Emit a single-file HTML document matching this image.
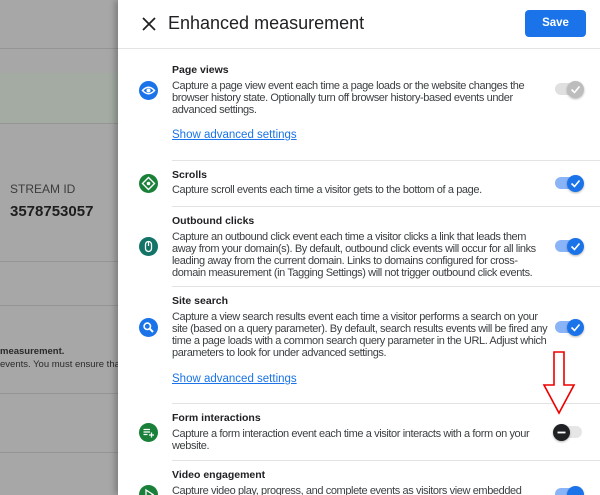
<!DOCTYPE html>
<html><head><meta charset="utf-8"><style>
*{margin:0;padding:0;box-sizing:border-box}
html,body{width:600px;height:495px;overflow:hidden}
body{position:relative;font-family:"Liberation Sans",Arial,sans-serif;background:#a7a7a7}
.a{position:absolute;white-space:nowrap}
.hl{position:absolute;left:0;width:118px;height:1px;background:#959595}
#panel{position:absolute;left:118px;top:0;width:482px;height:495px;background:#fff;box-shadow:-3px 0 6px rgba(0,0,0,.25);overflow:hidden}
.t{position:absolute;left:54px;font-size:10.5px;font-weight:bold;color:#202124}
.d{position:absolute;left:54px;font-size:11px;letter-spacing:-0.4px;line-height:12px;color:#3c4043;white-space:nowrap}
.lk{position:absolute;left:54px;font-size:11.5px;color:#1a73e8;text-decoration:underline}
.dv{position:absolute;left:54px;right:0;height:1px;background:#e3e3e3}
.ic{position:absolute;left:21px;width:19px;height:19px;border-radius:50%}
.tg{position:absolute;left:437px;width:27px;height:12px;border-radius:6px;background:#8ab4f8}
.kn{position:absolute;width:17px;height:17px;border-radius:50%;top:-2.5px;left:12px;background:#1a73e8;box-shadow:0 1px 2px rgba(0,0,0,.3)}
</style></head><body>
<div class="hl" style="top:48px"></div>
<div class="a" style="left:0;top:73px;width:118px;height:50px;background:#a3aba3"></div>
<div class="hl" style="top:123px"></div>
<div class="a" style="left:10px;top:182px;font-size:12px;color:#3c3c3c">STREAM ID</div>
<div class="a" style="left:10px;top:203px;font-size:15px;font-weight:bold;color:#1e1e1e">3578753057</div>
<div class="hl" style="top:261px"></div>
<div class="hl" style="top:305px"></div>
<div class="a" style="left:0;top:346px;font-size:9.5px;font-weight:bold;color:#2a2a2a">measurement.</div>
<div class="a" style="left:0;top:359px;font-size:9.5px;color:#2a2a2a">events. You must ensure tha</div>
<div class="hl" style="top:393px"></div>
<div class="hl" style="top:452px"></div>

<div id="panel">
<svg class="a" style="left:24px;top:17px" width="14" height="14" viewBox="0 0 14 14"><path d="M1 1L13 13M13 1L1 13" stroke="#202124" stroke-width="1.8"/></svg>
<div class="a" style="left:50px;top:13px;font-size:18px;color:#202124">Enhanced measurement</div>
<div class="a" style="left:407px;top:10px;width:61px;height:27px;background:#1a73e8;border-radius:4px;color:#fff;font-size:11.5px;font-weight:bold;text-align:center;line-height:27px">Save</div>
<div class="a" style="left:0;right:0;top:48px;height:1px;background:#e3e3e3"></div>

<div class="ic" style="top:81px;background:#1a73e8"><svg width="19" height="19" viewBox="0 0 19 19"><path d="M3.5 9.5Q9.5 3 15.5 9.5Q9.5 16 3.5 9.5Z" fill="none" stroke="#fff" stroke-width="1.5"/><circle cx="9.5" cy="9.5" r="2" fill="#fff"/></svg></div>
<div class="t" style="top:64px">Page views</div>
<div class="d" style="top:80px">Capture a page view event each time a page loads or the website changes the<br>browser history state. Optionally turn off browser history-based events under<br>advanced settings.</div>
<div class="lk" style="top:129px">Show advanced settings</div>
<div class="tg" style="top:83px;background:#e0e0e0"><div class="kn" style="background:#bdbdbd"><svg width="17" height="17" viewBox="0 0 17 17"><path d="M4.5 8.5L7.5 11.5L12.5 5.5" fill="none" stroke="#fff" stroke-width="1.6"/></svg></div></div>
<div class="dv" style="top:160px"></div>

<div class="ic" style="top:174px;background:#188038"><svg width="19" height="19" viewBox="0 0 19 19"><path d="M9.5 3.5L15.5 9.5L9.5 15.5L3.5 9.5Z" fill="none" stroke="#fff" stroke-width="1.4"/><circle cx="9.5" cy="9.5" r="1.8" fill="#fff"/></svg></div>
<div class="t" style="top:169px">Scrolls</div>
<div class="d" style="top:184px">Capture scroll events each time a visitor gets to the bottom of a page.</div>
<div class="tg" style="top:177px"><div class="kn"><svg width="17" height="17" viewBox="0 0 17 17"><path d="M4.5 8.5L7.5 11.5L12.5 5.5" fill="none" stroke="#fff" stroke-width="1.6"/></svg></div></div>
<div class="dv" style="top:206px"></div>

<div class="ic" style="top:237px;background:#137367"><svg width="19" height="19" viewBox="0 0 19 19"><rect x="6.5" y="4.5" width="6" height="10" rx="3" fill="none" stroke="#fff" stroke-width="1.3"/><path d="M9.5 5V9" stroke="#fff" stroke-width="1.2"/></svg></div>
<div class="t" style="top:215px">Outbound clicks</div>
<div class="d" style="top:231px">Capture an outbound click event each time a visitor clicks a link that leads them<br>away from your domain(s). By default, outbound click events will occur for all links<br>leading away from the current domain. Links to domains configured for cross-<br>domain measurement (in Tagging Settings) will not trigger outbound click events.</div>
<div class="tg" style="top:240px"><div class="kn"><svg width="17" height="17" viewBox="0 0 17 17"><path d="M4.5 8.5L7.5 11.5L12.5 5.5" fill="none" stroke="#fff" stroke-width="1.6"/></svg></div></div>
<div class="dv" style="top:286px"></div>

<div class="ic" style="top:318px;background:#1a73e8"><svg width="19" height="19" viewBox="0 0 19 19"><circle cx="8.3" cy="8.3" r="3.2" fill="none" stroke="#fff" stroke-width="1.6"/><path d="M10.6 10.6L14 14" stroke="#fff" stroke-width="2"/></svg></div>
<div class="t" style="top:295px">Site search</div>
<div class="d" style="top:311px">Capture a view search results event each time a visitor performs a search on your<br>site (based on a query parameter). By default, search results events will be fired any<br>time a page loads with a common search query parameter in the URL. Adjust which<br>parameters to look for under advanced settings.</div>
<div class="lk" style="top:373px">Show advanced settings</div>
<div class="tg" style="top:321px"><div class="kn"><svg width="17" height="17" viewBox="0 0 17 17"><path d="M4.5 8.5L7.5 11.5L12.5 5.5" fill="none" stroke="#fff" stroke-width="1.6"/></svg></div></div>
<div class="dv" style="top:403px"></div>

<div class="ic" style="top:423px;background:#188038"><svg width="19" height="19" viewBox="0 0 19 19"><path d="M4.5 6.5H11M4.5 9H11M4.5 11.5H8.5M12.5 9.5V14.5M10 12H15" stroke="#fff" stroke-width="1.3"/></svg></div>
<div class="t" style="top:412px">Form interactions</div>
<div class="d" style="top:428px">Capture a form interaction event each time a visitor interacts with a form on your<br>website.</div>
<div class="tg" style="top:426px;background:#e6e6e6"><div class="kn" style="left:-2px;background:#202124"><svg width="17" height="17" viewBox="0 0 17 17"><path d="M4.5 8.5H12.5" stroke="#fff" stroke-width="1.8"/></svg></div></div>
<div class="dv" style="top:460px"></div>

<div class="ic" style="top:485px;background:#188038"><svg width="19" height="19" viewBox="0 0 19 19"><path d="M7 5L14 9.5L7 14Z" fill="none" stroke="#fff" stroke-width="1.3"/></svg></div>
<div class="t" style="top:469px">Video engagement</div>
<div class="d" style="top:485px">Capture video play, progress, and complete events as visitors view embedded</div>
<div class="tg" style="top:488px"><div class="kn"></div></div>

<svg class="a" style="left:424px;top:350px" width="34" height="66" viewBox="0 0 34 66"><path d="M12 2H22V35H32L17 63L2 35H12Z" fill="#fff" stroke="#e00" stroke-width="1.6"/></svg>
</div>
</body></html>
